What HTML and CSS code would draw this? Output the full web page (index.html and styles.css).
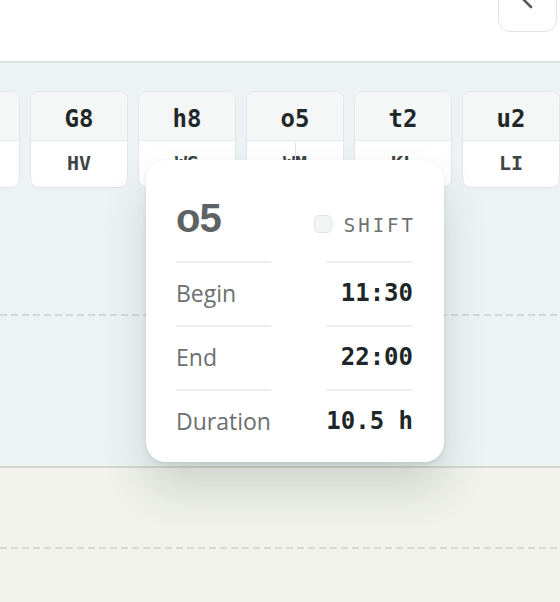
FILE: index.html
```html
<!DOCTYPE html>
<html>
<head>
<meta charset="utf-8">
<link rel="stylesheet" href="styles.css">
</head>
<body>
<div class="page">
  <header class="topbar">
    <button class="back-btn" aria-label="Back">
      <svg width="20" height="30" viewBox="0 0 20 30"><path d="M14 1 L5 10 L14 19" fill="none" stroke="#545959" stroke-width="2.6" stroke-linecap="round" stroke-linejoin="round"/></svg>
    </button>
  </header>
  <section class="lane lane-blue">
    <div class="cards">
      <div class="card"><div class="card-code"></div><div class="card-label"></div></div>
      <div class="card"><div class="card-code">G8</div><div class="card-label">HV</div></div>
      <div class="card"><div class="card-code">h8</div><div class="card-label">WS</div></div>
      <div class="card active"><div class="card-code">o5</div><div class="card-label">WM</div></div>
      <div class="card"><div class="card-code">t2</div><div class="card-label">KL</div></div>
      <div class="card"><div class="card-code">u2</div><div class="card-label">LI</div></div>
    </div>
    <div class="dash dash-blue"></div>
  </section>
  <section class="lane lane-green">
    <div class="dash dash-green"></div>
  </section>

  <div class="popover">
    <div class="pop-head">
      <span class="pop-title">o5</span>
      <span class="pop-tag"><span class="checkbox"></span>SHIFT</span>
    </div>
    <div class="pop-grid">
      <div class="cell label">Begin</div><div class="cell value">11:30</div>
      <div class="cell label">End</div><div class="cell value">22:00</div>
      <div class="cell label">Duration</div><div class="cell value">10.5 h</div>
    </div>
  </div>
</div>
</body>
</html>
```
FILE: styles.css
```css
html, body {
  margin: 0;
  padding: 0;
  background: #ffffff;
}
.page {
  position: relative;
  width: 560px;
  height: 602px;
  overflow: hidden;
  font-family: "Open Sans", "Liberation Sans", sans-serif;
}
.topbar {
  height: 61px;
  border-bottom: 2px solid #dbe3e3;
  display: flex;
  justify-content: flex-end;
  align-items: flex-start;
  padding-right: 3px;
  background: #ffffff;
}
.back-btn {
  width: 59px;
  height: 57px;
  margin-top: -25px;
  border: 1px solid #e2e4e4;
  border-radius: 12px;
  background: #ffffff;
  display: flex;
  align-items: flex-end;
  justify-content: center;
  padding: 0 0 13px 0;
  box-sizing: border-box;
}
.back-btn svg { display: block; margin-left: -2px; }
.lane-blue {
  height: 405px;
  background: #edf3f4;
  border-bottom: 2px solid #d3d9cf;
  padding-top: 28px;
  box-sizing: border-box;
}
.lane-green {
  height: 134px;
  background: #f0f2eb;
  padding-top: 79px;
  box-sizing: border-box;
}
.cards {
  display: flex;
  gap: 10px;
  margin-left: -78px;
}
.card {
  position: relative;
  flex: 0 0 98px;
  height: 97px;
  box-sizing: border-box;
  border: 1px solid #e1e7e7;
  border-radius: 9px;
  background: #ffffff;
  overflow: hidden;
  display: flex;
  flex-direction: column;
}
.card-code {
  height: 49px;
  background: #f5f7f7;
  border-bottom: 1px solid #e4e8e8;
  display: flex;
  align-items: center;
  justify-content: center;
  font-family: "DejaVu Sans Mono", "Liberation Mono", monospace;
  font-weight: 700;
  font-size: 24px;
  color: #1e2828;
  padding-top: 6px;
  box-sizing: border-box;
}
.card-label {
  flex: 1;
  display: flex;
  align-items: center;
  justify-content: center;
  font-family: "DejaVu Sans Mono", "Liberation Mono", monospace;
  font-weight: 700;
  font-size: 20px;
  color: #3f4545;
  padding-bottom: 2px;
}
.card.active::after {
  content: "";
  position: absolute;
  left: 48px;
  top: 50px;
  width: 1px;
  height: 20px;
  background: #dfe5e5;
}
.dash {
  height: 2px;
}
.dash-blue {
  margin-top: 126px;
  background: repeating-linear-gradient(to right, #cfd9d9 0 7px, transparent 7px 11px);
}
.dash-green {
  background: repeating-linear-gradient(to right, #d6dad1 0 7px, transparent 7px 11px);
}
.popover {
  position: absolute;
  left: 146px;
  top: 160px;
  width: 298px;
  height: 302px;
  box-sizing: border-box;
  background: #ffffff;
  border-radius: 20px;
  padding: 30px 31px 0 30px;
  box-shadow: 0 2px 4px rgba(40, 50, 50, 0.10), 0 26px 44px rgba(40, 55, 50, 0.16);
}
.pop-head {
  display: flex;
  justify-content: space-between;
  align-items: baseline;
  height: 56px;
  line-height: 56px;
  margin-bottom: 15px;
}
.pop-title {
  font-family: "Liberation Sans", Arial, sans-serif;
  font-weight: 700;
  font-size: 40px;
  letter-spacing: -1px;
  color: #5d6262;
}
.pop-tag {
  font-family: "DejaVu Sans Mono", "Liberation Mono", monospace;
  font-size: 19px;
  letter-spacing: 3px;
  color: #6c7171;
  margin-right: -3px;
}
.checkbox {
  display: inline-block;
  width: 18px;
  height: 18px;
  box-sizing: border-box;
  border: 1px solid #e4e6e6;
  border-radius: 5px;
  background: #f3f4f4;
  margin-right: 12px;
  vertical-align: -1px;
}
.pop-grid {
  display: grid;
  grid-template-columns: max-content max-content;
  justify-content: space-between;
}
.cell {
  border-top: 2px solid #eeefef;
  height: 64px;
  box-sizing: border-box;
  display: flex;
  align-items: center;
  padding-bottom: 3px;
}
.label {
  font-size: 23px;
  color: #6b7070;
}
.value {
  justify-content: flex-end;
  font-family: "DejaVu Sans Mono", "Liberation Mono", monospace;
  font-weight: 700;
  font-size: 24px;
  color: #1e2727;
}
```
